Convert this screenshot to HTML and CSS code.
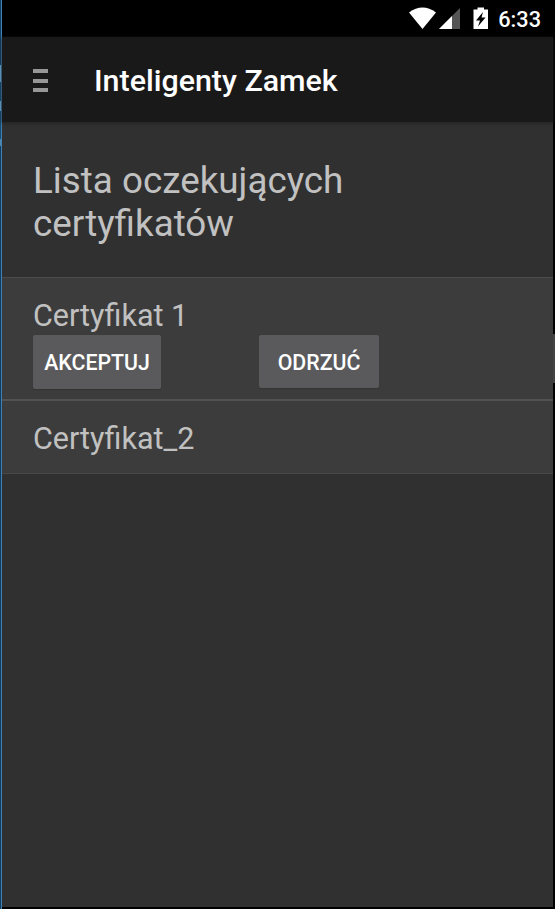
FILE: index.html
```
<!DOCTYPE html>
<html lang="pl">
<head>
<meta charset="utf-8">
<title>Inteligenty Zamek</title>
<link rel="stylesheet" href="styles.css">
</head>
<body>
<div class="desktop-edge"></div>
<main class="screen">
  <div class="status">
    <svg class="status-icons" width="82" height="24" viewBox="0 0 82 24">
      <path d="M0 5.500Q13.500-4.500 27 5.500L13.500 22Z" fill="#fff"/>
      <path d="M30 22L51 1V22Z" fill="#555"/>
      <path d="M30 22L43 9V22Z" fill="#fff"/>
      <path d="M64.500 2.500H68.500V0.500H75V2.500H79V22H64.500Z" fill="#fff"/>
      <path d="M74 5L67 13.500H71L69 19.500L76.500 10.500H72.500Z" fill="#000"/>
    </svg>
    <time class="clock">6:33</time>
  </div>
  <header class="toolbar">
    <button class="menu" aria-label="Menu"><span></span><span></span><span></span></button>
    <div class="app-title">Inteligenty Zamek</div>
  </header>
  <h1 class="heading">Lista oczekujących<br>certyfikatów</h1>
  <ul class="list">
    <li class="item item-open">
      <div class="name">Certyfikat 1</div>
      <div class="actions">
        <button class="btn accept">AKCEPTUJ</button>
        <button class="btn reject">ODRZUĆ</button>
      </div>
    </li>
    <li class="item item-closed"><div class="name">Certyfikat_2</div></li>
  </ul>
</main>
<div class="scroll-edge"></div>
</body>
</html>
```
FILE: styles.css
```
* { box-sizing: border-box; }
body {
  margin: 0;
  height: 909px;
  overflow: hidden;
  display: flex;
  background: #000;
  font-family: Roboto, "Liberation Sans", sans-serif;
}
.desktop-edge {
  width: 2px;
  border-right: 1px solid #4080b0;
  background: linear-gradient(#123c60 0 65px, #67a5ce 65px 82px, #174a70 82px 101px, #67a5ce 101px 111px, #174a70 111px 139px, #4d88b0 139px 146px, #123c60 146px);
}
.screen { width: 551px; height: 907px; background: #303030; }
.status {
  height: 37px;
  background: #000;
  display: flex;
  justify-content: flex-end;
  align-items: center;
  padding-right: 12px;
  color: #fff;
}
.status-icons { margin-right: 7px; }
.clock { padding-top: 2px; font-size: 21.7px; font-weight: 500; line-height: 37px; }
.toolbar {
  height: 85px;
  background: #191919;
  display: flex;
  align-items: center;
  padding: 1px 0 0 31px;
  box-shadow: 0 1px 3px #202020;
}
.menu {
  width: 15px;
  padding: 1px 0 0;
  border: 0;
  background: none;
  display: grid;
  gap: 5.5px;
}
.menu span { height: 4px; background: #979797; }
.app-title { margin-left: 46px; padding-top: 1px; color: #fff; font-size: 30.4px; font-weight: 500; white-space: nowrap; }
.heading {
  margin: 0;
  height: 155px;
  padding: 37px 31px 0;
  color: #c1c1c1;
  font-size: 36.8px;
  font-weight: 400;
  line-height: 43px;
}
.list { margin: 0; padding: 0; list-style: none; }
.item { background: #3c3c3c; padding-left: 31px; border-top: 1px solid #4b4b4b; }
.item-open { height: 122px; padding-top: 19px; }
.item-closed { height: 75px; padding-top: 19px; border-top: 2px solid #525252; border-bottom: 1px solid #484848; }
.name { color: #c1c1c1; font-size: 30.5px; line-height: 37px; }
.actions { display: flex; align-items: flex-start; gap: 98px; margin-top: 1px; }
.btn {
  height: 54px;
  padding: 0;
  border: 0;
  border-radius: 2px;
  background: #5a5a5c;
  box-shadow: 0 1px 1px #333;
  color: #fff;
  font: 500 21.3px Roboto, "Liberation Sans", sans-serif;
}
.accept { width: 128px; }
.reject { width: 120px; height: 53px; padding-top: 2px; }
.scroll-edge { width: 2px; height: 49px; margin-top: 334px; background: #424242; }
```
